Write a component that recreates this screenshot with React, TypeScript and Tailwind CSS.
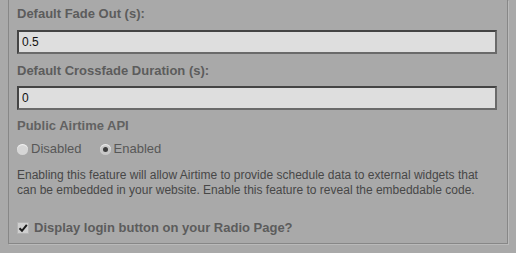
import React, { useState } from "react";

const font = "font-['Liberation_Sans',Arial,sans-serif]";

function Radio({ checked }: { checked: boolean }) {
  return (
    <span
      className={`relative inline-flex w-[11px] h-[11px] rounded-full items-center justify-center ${
        checked ? "bg-[#c8c8c8]" : "bg-[#d6d6d6]"
      } shadow-[inset_0_1px_1px_rgba(255,255,255,0.7)]`}
    >
      {checked && <span className="w-[5px] h-[5px] rounded-full bg-[#3d3d3d]" />}
    </span>
  );
}

export default function App() {
  const [fadeOut, setFadeOut] = useState("0.5");
  const [crossfade, setCrossfade] = useState("0");
  const [showLogin, setShowLogin] = useState(true);

  return (
    <div className={`min-h-screen bg-[#a9a9a9] ${font}`}>
      <div className="ml-2 w-[500px] border-x border-b border-[#878787] shadow-[1px_1px_0_#bababa] pl-[8px] pr-[10px] pt-[6px] pb-[7px]">
        <label className="block text-[13px] leading-4 font-bold text-[#5c5c5c]">
          Default Fade Out (s):
        </label>
        <input
          value={fadeOut}
          onChange={(e) => setFadeOut(e.target.value)}
          className="mt-2 block w-[480px] h-[24px] px-[3px] bg-[#dedede] border-2 border-t-[#444] border-l-[#444] border-r-[#6a6a6a] border-b-[#6a6a6a] text-[12px] text-[#111] outline-none"
        />

        <label className="block mt-[9px] text-[13px] leading-4 font-bold text-[#5c5c5c]">
          Default Crossfade Duration (s):
        </label>
        <input
          value={crossfade}
          onChange={(e) => setCrossfade(e.target.value)}
          className="mt-[7px] block w-[480px] h-[24px] px-[3px] bg-[#dedede] border-2 border-t-[#444] border-l-[#444] border-r-[#6a6a6a] border-b-[#6a6a6a] text-[12px] text-[#111] outline-none"
        />

        <div className="mt-2 text-[13px] leading-4 font-bold text-[#626262]">Public Airtime API</div>
        <div className="mt-[7px] flex items-center text-[13px] leading-4 text-[#575757]">
          <span className="flex items-center gap-[3px]">
            <Radio checked={false} />
            Disabled
          </span>
          <span className="ml-[18px] flex items-center gap-[3px]">
            <Radio checked={true} />
            Enabled
          </span>
        </div>

        <p className="mt-[11px] text-[12px] leading-[15px] text-[#474747]">
          Enabling this feature will allow Airtime to provide schedule data to external widgets that can be
          embedded in your website. Enable this feature to reveal the embeddable code.
        </p>

        <label className="mt-[22px] flex items-center gap-[5px] text-[13px] leading-4 font-bold text-[#5c5c5c]">
          <span
            onClick={() => setShowLogin(!showLogin)}
            className="w-[12px] h-[12px] bg-[#cfcfcf] border border-[#b4b4b4] flex items-center justify-center"
          >
            {showLogin && (
              <svg viewBox="0 0 10 10" className="w-[10px] h-[10px]">
                <path d="M1.5 5.2 L4 7.8 L8.8 1.8" fill="none" stroke="#1a1a1a" strokeWidth="2" />
              </svg>
            )}
          </span>
          Display login button on your Radio Page?
        </label>
      </div>
    </div>
  );
}
